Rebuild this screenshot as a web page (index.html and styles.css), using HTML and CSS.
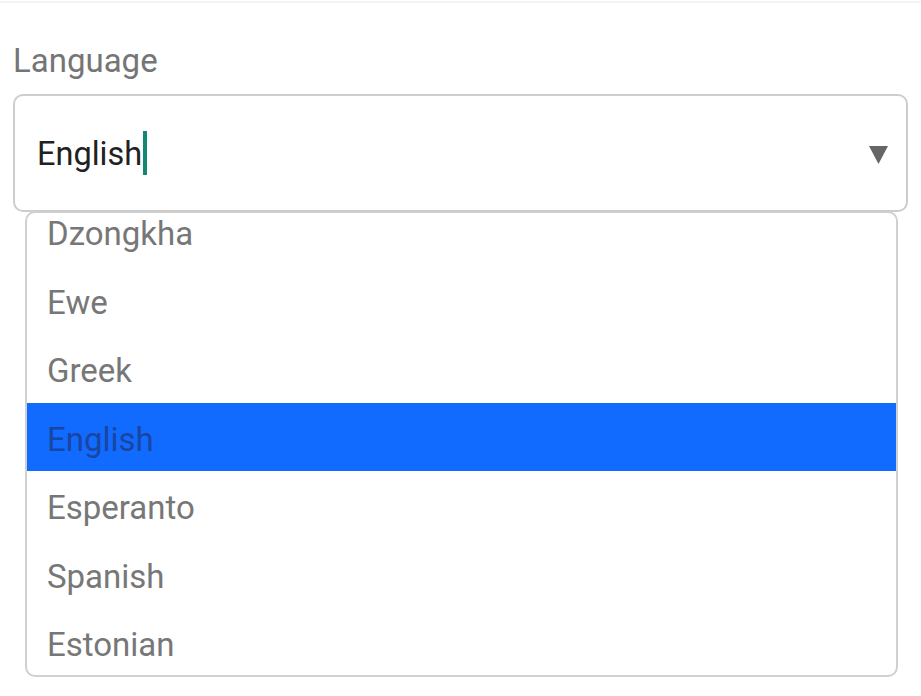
FILE: index.html
```html
<!DOCTYPE html>
<html>
<head>
<meta charset="utf-8">
<link rel="stylesheet" href="styles.css">
</head>
<body>
<div class="page">
  <div class="field">
    <div class="label">Language</div>
    <div class="input">
      <span class="value">English</span><span class="caret"></span>
      <svg class="arrow" width="19" height="18" viewBox="0 0 19 18"><polygon points="0,0 19,0 9.5,18" fill="#666"/></svg>
    </div>
    <div class="list">
      <ul class="options">
        <li class="option">Dzongkha</li>
        <li class="option">Ewe</li>
        <li class="option">Greek</li>
        <li class="option selected">English</li>
        <li class="option">Esperanto</li>
        <li class="option">Spanish</li>
        <li class="option">Estonian</li>
      </ul>
    </div>
  </div>
</div>
</body>
</html>
```
FILE: styles.css
```css
html, body {
  margin: 0;
  padding: 0;
  background: #fff;
  font-family: Roboto, "Noto Sans", sans-serif;
}
.page {
  border-top: 2px solid #f4f4f4;
  margin-top: 1px;
  height: 693px;
  box-sizing: border-box;
  padding: 38px 13px 0 13px;
}
.field {
  width: 895px;
  display: flex;
  flex-direction: column;
}
.label {
  font-size: 33px;
  line-height: 40px;
  color: #757575;
  height: 40px;
  margin-bottom: 13px;
}
.input {
  height: 118px;
  box-sizing: border-box;
  border: 2px solid #cdcdcd;
  border-radius: 10px;
  display: flex;
  align-items: center;
  padding-left: 22px;
  padding-right: 18px;
  position: relative;
  z-index: 1;
  background: #fff;
}
.value {
  font-size: 32.5px;
  color: #212121;
  line-height: 40px;
  margin-top: 2px;
}
.caret {
  display: inline-block;
  width: 4px;
  height: 44px;
  background: #13876f;
  margin-left: 1px;
}
.arrow {
  margin-left: auto;
  margin-top: 4px;
}
.list {
  margin-left: 12px;
  width: 873px;
  height: 466px;
  box-sizing: border-box;
  border: 2px solid #d0d0d0;
  border-radius: 10px;
  overflow: hidden;
  margin-top: -1px;
  background: #fff;
}
.options {
  list-style: none;
  margin: -16px 0 0 0;
  padding: 0;
}
.option {
  height: 68.5px;
  box-sizing: border-box;
  display: flex;
  align-items: center;
  padding-left: 20px;
  padding-top: 5px;
  font-size: 33px;
  color: #777;
}
.option.selected {
  background: #116bff;
  color: #1b45a3;
}
```
